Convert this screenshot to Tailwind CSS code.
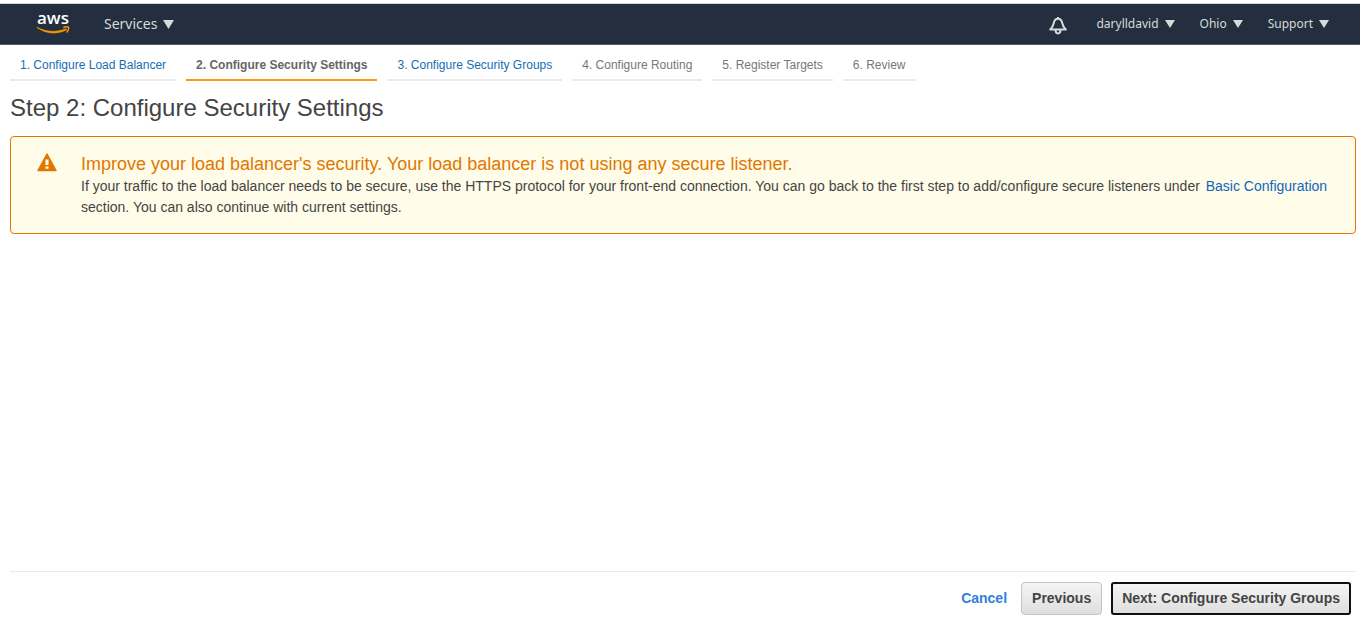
<!DOCTYPE html>
<html lang="en">
<head>
<meta charset="utf-8">
<meta name="viewport" content="width=device-width, initial-scale=1">
<title>Configure Security Settings</title>
<script src="https://cdn.jsdelivr.net/npm/@tailwindcss/browser@4"></script>
</head>
<body class="flex min-h-screen flex-col bg-white font-['Liberation_Sans',Arial,sans-serif] text-sm text-[#444]">
  <header class="mt-[3px] flex h-[42px] items-center border-t border-b border-t-[#d5d5d5] border-b-[#535b67] bg-[#232f3e] pr-[31px] pl-9 font-['Noto_Sans','Open_Sans',sans-serif] text-xs text-[#d5dbdb]">
    <a href="#" aria-label="AWS home" class="flex w-[34px] flex-col items-center text-white">
      <span class="h-[13px] font-['Open_Sans','Noto_Sans',sans-serif] text-[17px] leading-[10px] font-semibold">aws</span>
      <svg class="h-[9px] w-[34px]" viewBox="0 0 34 9" fill="none" stroke="#ff9900" aria-hidden="true"><path d="M.8 1.300C9.500 7.800 20.500 8.800 30.500 3.800l-.5-.9C20 6.600 10.500 6.300.8 1.300z" fill="#ff9900" stroke-width=".7"/><path d="M27.300 1.500c2.200-.7 4.600-.8 5.200-.2.500.8-.3 3.500-1.800 5.200" stroke-width="1.400"/></svg>
    </a>
    <button type="button" class="ml-[34px] flex items-center gap-[6px] text-sm">Services
      <svg class="h-[9px] w-[11px]" viewBox="0 0 11 9" fill="currentColor" aria-hidden="true"><path d="M0 0h11L5.500 9z"/></svg>
    </button>
    <nav class="ml-auto flex items-center" aria-label="Account">
      <button type="button" aria-label="Notifications" class="mr-[29px]">
        <svg class="mt-1 block h-[18px] w-[18px]" viewBox="0 0 18 18" fill="none" stroke="currentColor" stroke-width="2" stroke-linejoin="round" aria-hidden="true"><path d="M1.200 12.600C3.200 10.800 4.200 8.800 4.700 6.300 5.300 3.300 6.700 1.800 9 1.800s3.700 1.500 4.300 4.500c.5 2.500 1.500 4.500 3.500 6.300z"/><path d="M6.500 12.600c0 5.200 5 5.200 5 0M9 0v2"/></svg>
      </button>
      <button type="button" class="mr-[25px] flex items-center gap-[6px]">darylldavid
        <svg class="h-2 w-[10px]" viewBox="0 0 10 8" fill="currentColor" aria-hidden="true"><path d="M0 0h10L5 8z"/></svg>
      </button>
      <button type="button" class="mr-[25px] flex items-center gap-[6px]">Ohio
        <svg class="h-2 w-[10px]" viewBox="0 0 10 8" fill="currentColor" aria-hidden="true"><path d="M0 0h10L5 8z"/></svg>
      </button>
      <button type="button" class="flex items-center gap-[6px]">Support
        <svg class="h-2 w-[10px]" viewBox="0 0 10 8" fill="currentColor" aria-hidden="true"><path d="M0 0h10L5 8z"/></svg>
      </button>
    </nav>
  </header>

  <nav class="flex gap-[10px] px-[10px] text-xs leading-4 text-[#777]" aria-label="Wizard steps">
    <a href="#" class="border-b-2 border-[#eaeaea] px-[10px] pt-3 pb-[6px] text-[#146eb4]">1. Configure Load Balancer</a>
    <a href="#" aria-current="step" class="border-b-2 border-[#ff9914] px-[10px] pt-3 pb-[6px] font-bold text-[#666]">2. Configure Security Settings</a>
    <a href="#" class="border-b-2 border-[#eaeaea] px-[10px] pt-3 pb-[6px] text-[#146eb4]">3. Configure Security Groups</a>
    <span class="border-b-2 border-[#eaeaea] px-[10px] pt-3 pb-[6px]">4. Configure Routing</span>
    <span class="border-b-2 border-[#eaeaea] px-[10px] pt-3 pb-[6px]">5. Register Targets</span>
    <span class="border-b-2 border-[#eaeaea] px-[10px] pt-3 pb-[6px]">6. Review</span>
  </nav>

  <main class="flex-1 pr-1 pl-[10px]">
    <h1 class="mt-3 text-2xl leading-[30px]">Step 2: Configure Security Settings</h1>
    <section class="mt-[13px] flex rounded border border-[#e07700] bg-[#fffce9] pt-4 pr-6 pb-[15px] pl-[26px]">
      <svg class="mr-6 h-[19px] w-5 shrink-0" viewBox="0 0 20 19" aria-hidden="true"><path d="M10 1 19 17.500H1z" fill="#e07700" stroke="#e07700" stroke-width="1.500" stroke-linejoin="round"/><path d="M8.500 6.500h3v5.500h-3zM8.500 13.500h3v2.200h-3z" fill="#fffce9"/></svg>
      <div>
        <h2 class="mb-px text-lg leading-[22px] text-[#e07700]">Improve your load balancer's security. Your load balancer is not using any secure listener.</h2>
        <p class="leading-[21px]">If your traffic to the load balancer needs to be secure, use the HTTPS protocol for your front-end connection. You can go back to the first step to add/configure secure listeners under <a href="#" class="ml-0.5 text-[#1166bb]">Basic Configuration</a> section. You can also continue with current settings.</p>
      </div>
    </section>
  </main>

  <footer class="mr-1 ml-[10px] flex items-center justify-end gap-[9px] border-t border-[#eaeaea] pt-[10px] pr-[5px] pb-[14px] font-bold">
    <a href="#" class="mr-[5px] pb-0.5 text-[#2e7fdb]">Cancel</a>
    <button type="button" class="h-[33px] rounded border border-[#c4c4c4] bg-linear-to-b from-[#f5f5f5] to-[#dedede] px-[10px] pb-0.5">Previous</button>
    <button type="button" class="h-[33px] rounded-[3px] border-2 border-[#101010] bg-linear-to-b from-[#f5f5f5] to-[#dedede] px-[9px] pb-0.5">Next: Configure Security Groups</button>
  </footer>
</body>
</html>
